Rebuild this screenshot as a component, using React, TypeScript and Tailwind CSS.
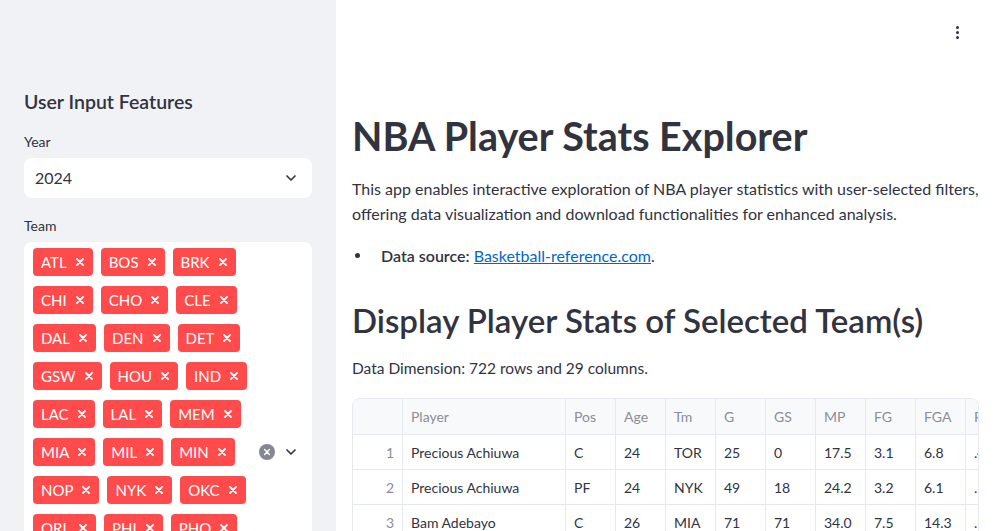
import { ChevronDown } from "lucide-react";

const teams = [
  "ATL", "BOS", "BRK", "CHI", "CHO", "CLE", "DAL", "DEN", "DET", "GSW", "HOU",
  "IND", "LAC", "LAL", "MEM", "MIA", "MIL", "MIN", "NOP", "NYK", "OKC", "ORL",
  "PHI", "PHO", "POR", "SAC", "SAS", "TOR", "TOT", "UTA", "WAS",
];

const columns = [
  { key: "Player", w: "w-[163px]" },
  { key: "Pos", w: "w-[50px]" },
  { key: "Age", w: "w-[50px]" },
  { key: "Tm", w: "w-[50px]" },
  { key: "G", w: "w-[50px]" },
  { key: "GS", w: "w-[50px]" },
  { key: "MP", w: "w-[50px]" },
  { key: "FG", w: "w-[50px]" },
  { key: "FGA", w: "w-[50px]" },
  { key: "FG%", w: "w-[50px]" },
];

const rows = [
  ["Precious Achiuwa", "C", "24", "TOR", "25", "0", "17.5", "3.1", "6.8", ".459"],
  ["Precious Achiuwa", "PF", "24", "NYK", "49", "18", "24.2", "3.2", "6.1", ".521"],
  ["Bam Adebayo", "C", "26", "MIA", "71", "71", "34.0", "7.5", "14.3", ".521"],
];

function SmallX({ className }: { className?: string }) {
  return (
    <svg viewBox="0 0 10 10" className={className} fill="none" stroke="currentColor" strokeWidth="1.8" strokeLinecap="round">
      <path d="M2 2 L8 8 M8 2 L2 8" />
    </svg>
  );
}

function Tag({ label }: { label: string }) {
  return (
    <span className="flex h-7 items-center gap-[8px] rounded bg-[#ff4b4b] pl-2 pr-[8px] text-[15px] text-white">
      {label}
      <SmallX className="h-[10px] w-[10px]" />
    </span>
  );
}

export default function App() {
  return (
    <div className="flex h-[531px] w-[995px] overflow-hidden bg-white font-['Source_Sans_Pro',Lato,sans-serif] text-[#31333f]">
      <aside className="w-[336px] shrink-0 bg-[#f0f2f6] px-6 pt-[88px]">
        <h2 className="text-[19.5px] leading-[28px] font-semibold">User Input Features</h2>

        <div className="mt-[16px] text-[14px] leading-[20px]">Year</div>
        <div className="mt-[6px] flex h-10 items-center justify-between rounded-lg bg-white pl-[11px] pr-[13px] text-[16px]">
          <span>2024</span>
          <ChevronDown className="h-4 w-4" strokeWidth={2.5} />
        </div>

        <div className="mt-[18px] text-[14px] leading-[20px]">Team</div>
        <div className="mt-[6px] flex items-center rounded-lg bg-white py-[6px] pl-[9px] pr-[13px]">
          <div className="flex flex-1 flex-wrap gap-x-2 gap-y-[10px] pr-[4px]">
            {teams.map((t) => (
              <Tag key={t} label={t} />
            ))}
          </div>
          <div className="flex items-center gap-2">
            <span className="flex h-4 w-4 items-center justify-center rounded-full bg-[#858794] text-white">
              <SmallX className="h-[8px] w-[8px]" />
            </span>
            <ChevronDown className="h-4 w-4" strokeWidth={2.5} />
          </div>
        </div>
      </aside>

      <main className="min-w-0 flex-1 px-4">
        <div className="flex h-16 items-center justify-end pr-[20px]">
          <div className="flex flex-col gap-[2px]">
            <span className="h-[3px] w-[3px] rounded-full bg-[#31333f]" />
            <span className="h-[3px] w-[3px] rounded-full bg-[#31333f]" />
            <span className="h-[3px] w-[3px] rounded-full bg-[#31333f]" />
          </div>
        </div>

        <h1 className="mt-[46px] text-[39.5px] leading-[52px] font-bold">NBA Player Stats Explorer</h1>

        <p className="mt-[14px] text-[16px] leading-[25px]">
          This app enables interactive exploration of NBA player statistics with user-selected filters,
          offering data visualization and download functionalities for enhanced analysis.
        </p>

        <ul className="mt-[17px] text-[16px] leading-[25px]">
          <li className="flex">
            <span className="flex w-[29px] shrink-0 items-center pl-[3px]">
              <span className="h-[5px] w-[5px] rounded-full bg-[#31333f]" />
            </span>
            <span>
              <b className="font-semibold">Data source:</b>{" "}
              <a className="text-[#0068c9] underline">Basketball-reference.com</a>.
            </span>
          </li>
        </ul>

        <h2 className="mt-[31px] text-[33px] leading-[43px] font-semibold">Display Player Stats of Selected Team(s)</h2>

        <p className="mt-[14px] text-[15.5px] leading-[25px]">Data Dimension: 722 rows and 29 columns.</p>

        <div className="mt-[17px] overflow-hidden rounded-t-lg border border-[#e6e9ef] text-[14px]">
          <div className="flex w-max">
            <div className="flex h-[36px] w-[50px] shrink-0 items-center border-r border-b border-[#e6e9ef] bg-[#f8f9fb]" />
            {columns.map((c) => (
              <div
                key={c.key}
                className={`${c.w} flex h-[36px] shrink-0 items-center border-r border-b border-[#e6e9ef] bg-[#f8f9fb] px-2 text-[#8b8d98]`}
              >
                {c.key}
              </div>
            ))}
          </div>
          {rows.map((r, i) => (
            <div key={i} className="flex w-max">
              <div className="flex h-[35px] w-[50px] shrink-0 items-center justify-end border-r border-b border-[#e6e9ef] px-2 text-[#8b8d98]">
                {i + 1}
              </div>
              {r.map((v, j) => (
                <div
                  key={j}
                  className={`${columns[j].w} flex h-[35px] shrink-0 items-center border-r border-b border-[#e6e9ef] px-2`}
                >
                  {v}
                </div>
              ))}
            </div>
          ))}
        </div>
      </main>
    </div>
  );
}
